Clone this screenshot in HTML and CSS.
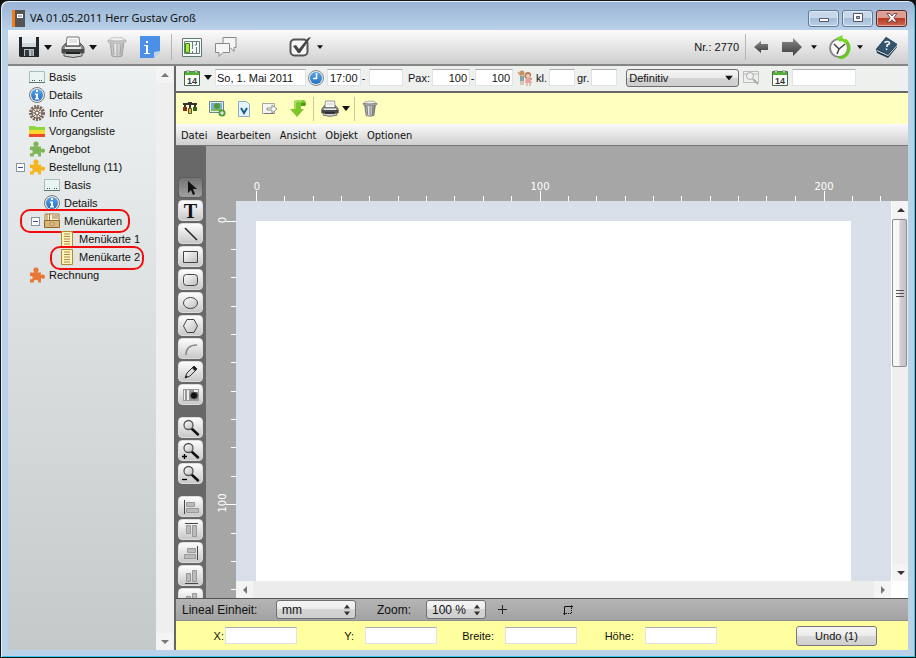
FILE: index.html
```html
<!DOCTYPE html>
<html lang="de">
<head>
<meta charset="utf-8">
<title>VA 01.05.2011 Herr Gustav Groß</title>
<link rel="stylesheet" href="styles.css">
</head>
<body>
<svg class="defs" aria-hidden="true">
  <defs>
    <linearGradient id="gBlue" x1="0" y1="0" x2="0" y2="1"><stop offset="0" stop-color="#5aa5ea"/><stop offset="1" stop-color="#2270c0"/></linearGradient>
    <linearGradient id="gGray" x1="0" y1="0" x2="0" y2="1"><stop offset="0" stop-color="#8a8a8a"/><stop offset="1" stop-color="#3c3c3c"/></linearGradient>
    <linearGradient id="gLight" x1="0" y1="0" x2="1" y2="1"><stop offset="0" stop-color="#ffffff"/><stop offset="1" stop-color="#bdbdbd"/></linearGradient>
    <linearGradient id="gBin" x1="0" y1="0" x2="1" y2="0"><stop offset="0" stop-color="#888"/><stop offset=".4" stop-color="#eee"/><stop offset="1" stop-color="#777"/></linearGradient>
  </defs>
  <symbol id="caret" viewBox="0 0 8 5"><path d="M0 0h8L4 5z" fill="#111"/></symbol>
  <symbol id="printer" viewBox="0 0 24 22">
    <path d="M6 1h12l1 9H5z" fill="#fafafa" stroke="#777"/>
    <path d="M8 4h8M8 6h8" stroke="#ccc"/>
    <path d="M2 10l3-3v3h14V7l3 3 1 2v5H1v-5z" fill="#8b8f8f" stroke="#555"/>
    <path d="M1 13h22v4H1z" fill="#454a4a"/>
    <path d="M4 11h16v2H4z" fill="#e5e8e5"/>
    <path d="M3 17h18v3q-9 3-18 0z" fill="#c9cccc" stroke="#555"/>
    <path d="M5 16h14v2H5z" fill="#222"/>
  </symbol>
  <symbol id="bin" viewBox="0 0 20 22">
    <path d="M3 6h14l-2 14q-5 2-10 0z" fill="url(#gBin)" stroke="#666"/>
    <path d="M6 8l1 11M10 8v12M14 8l-1 11" stroke="#666"/>
    <path d="M3 3q2-2 4-1 2-2 4 0 3-2 6 1v2H3z" fill="#eee" stroke="#999"/>
    <path d="M1 4q9 3 18 0v2q-9 3-18 0z" fill="#bbb" stroke="#666" stroke-width=".7"/>
  </symbol>
  <symbol id="calendar" viewBox="0 0 16 16">
    <path d="M.5 1.500h15v14H.5z" fill="#fff" stroke="#48664a"/>
    <path d="M1 1.500h14V5H1z" fill="#4fb52f"/>
    <path d="M3 0h2v3H3zM11 0h2v3h-2z" fill="#e8e8e8" stroke="#666" stroke-width=".5"/>
  </symbol>
  <symbol id="card" viewBox="0 0 16 14">
    <path d="M.5 1.500h15v11H.5z" fill="#eaf5f3" stroke="#a4bcbc"/>
    <path d="M0 12.500h16" stroke="#5c7776"/><path d="M3 10h1v1H3zM5 10h1v1H5zM10 10h1v1h-1zM12 10h1v1h-1z" fill="#3b5554"/>
  </symbol>
  <symbol id="info" viewBox="0 0 16 16">
    <circle cx="8" cy="8" r="7.500" fill="#e9eef2" stroke="#777"/><circle cx="8" cy="8" r="6" fill="url(#gBlue)"/>
    <path d="M7 3h2v2H7zM6 6.500h3V11h1v1.500H6V11h1V8H6z" fill="#fff"/>
  </symbol>
  <symbol id="puzzle" viewBox="0 0 16 16">
    <path d="M1 5.500h4.500C3.300 3 4.500.5 7 .5s3.700 2.500 1.500 5H12v2.700c2-1.300 4-.3 4 1.500s-2 2.800-4 1.300V15.500H9c1-2-.5-2.800-2-2.800s-3 .8-2 2.800H1V12c1.700.8 2.700 0 2.700-1.300S2.700 8.600 1 9.400z"/>
  </symbol>
  <symbol id="menu-card" viewBox="0 0 14 16">
    <path d="M1.500.5h11v15h-11z" fill="#fff3b8" stroke="#b18a33"/><path d="M4 3h6M4 5.500h6M4 8h6M4 10.500h6M4 13h6" stroke="#a98e4c"/>
  </symbol>
  <symbol id="lens" viewBox="0 0 22 18">
    <path d="M11 9l7 6.500" stroke="#111" stroke-width="2.500" stroke-linecap="round"/><circle cx="8.500" cy="6" r="4.500" fill="url(#gLight)" stroke="#555" stroke-width="1.300"/>
  </symbol>
  <symbol id="updown" viewBox="0 0 6 11"><path d="M0 4l3-4 3 4zM0 7h6l-3 4z" fill="#333"/></symbol>
</svg>

<div class="window">
  <header class="titlebar">
    <svg class="app-icon" width="13" height="17" viewBox="0 0 13 17"><path d="M0 0h13v17H0z" fill="#555"/><path d="M0 0h3v17H0z" fill="#f57c14"/><path d="M5 4h6v4H5z" fill="#fff"/><path d="M6 6h4" stroke="#5175a5"/></svg>
    <h1 class="title">VA 01.05.2011 Herr Gustav Groß</h1>
    <button class="win-btn" aria-label="Minimieren"><svg width="12" height="10" viewBox="0 0 12 10"><path d="M1.500 5.500h9v3h-9z" fill="#fff" stroke="#535666"/></svg></button>
    <button class="win-btn" aria-label="Maximieren"><svg width="12" height="10" viewBox="0 0 12 10"><path d="M1.500.5h9v8h-9z" fill="#fff" stroke="#535666"/><path d="M4.500 3.500h3v2h-3z" fill="#9cb4cf" stroke="#535666"/></svg></button>
    <button class="win-btn close" aria-label="Schließen"><svg width="12" height="10" viewBox="0 0 12 10"><path d="M1 .5h3L6 3 8 .5h3L7.800 4.800 11 9H8L6 6.700 4 9H1l3.200-4.200z" fill="#fff" stroke="#573038" stroke-width=".8"/></svg></button>
  </header>

  <div class="client">
    <div class="toolbar">
      <button class="tool save" aria-label="Speichern"><svg width="22" height="20" viewBox="0 0 22 20"><path d="M1 0h20v20H2l-1-1z" fill="#22282c"/><path d="M4 0h14v10H4z" fill="#e9eff1"/><path d="M4 6h14v4H4z" fill="#cfd8db"/><path d="M6 12h10v7H6z" fill="#b9c0c3"/><path d="M7 13h4v6H7z" fill="#333a3e"/><path d="M13 13h2v6h-2z" fill="#8b9397"/></svg></button>
      <button class="drop" aria-label="Speichern unter"><svg width="8" height="5"><use href="#caret"/></svg></button>
      <button class="tool print" aria-label="Drucken"><svg width="24" height="22"><use href="#printer"/></svg></button>
      <button class="drop" aria-label="Druckoptionen"><svg width="8" height="5"><use href="#caret"/></svg></button>
      <button class="tool trash" aria-label="Löschen" disabled><svg width="20" height="22"><use href="#bin"/></svg></button>
      <button class="tool note" aria-label="Information"><svg width="20" height="22" viewBox="0 0 20 22"><path d="M0 0h20v15l-6 7H0z" fill="#4b8fe8"/><path d="M14 22v-6l6-1z" fill="#bcd6fa"/><path d="M6 5h2v2H6zM4 9h4v8h2v1H4v-1h2v-7H4z" fill="#fff"/></svg></button>
      <span class="sep"></span>
      <button class="tool plan" aria-label="Raumplan"><svg width="20" height="19" viewBox="0 0 20 19"><path d="M.5.500h19v18H.5z" fill="#f5faf9" stroke="#5e7878"/><path d="M2.500 3.500h15v12h-15zM10.500 3v8M14.500 3v4h-2M14.500 16V9M10.500 13v3" fill="none" stroke="#667d7c"/><path d="M3.500 5.500h4v9h-4z" fill="#a8ea3c" stroke="#3f8a0b"/></svg></button>
      <button class="tool chat" aria-label="Kommentare"><svg width="22" height="20" viewBox="0 0 22 20"><path d="M8 .5h13v10h-2v4l-4-4H8z" fill="#f5f5f5" stroke="#888"/><path d="M.5 6.500h14v9H8l-4 4v-4H.5z" fill="#f5f5f5" stroke="#888"/></svg></button>
      <button class="tool check" aria-label="Erledigt"><svg width="23" height="20" viewBox="0 0 23 20"><rect x="1.500" y="2.500" width="17" height="16" rx="4" fill="#f8f8f8" stroke="#555" stroke-width="2"/><path d="M4 9l3-1 3 4L19 1l3-1-11 16H9z" fill="#444"/></svg></button>
      <button class="drop small" aria-label="Status wählen"><svg width="6" height="4"><use href="#caret"/></svg></button>
      <span class="number">Nr.: 2770</span>
      <span class="sep last"></span>
      <button class="tool" aria-label="Zurück"><svg width="14" height="12" viewBox="0 0 14 12"><path d="M0 6l7-6v3h7v6H7v3z" fill="url(#gGray)"/></svg></button>
      <button class="tool fwd" aria-label="Vor"><svg width="20" height="18" viewBox="0 0 20 18"><path d="M20 9l-9-9v4H0v10h11v4z" fill="url(#gGray)"/></svg></button>
      <button class="drop small" aria-label="Verlauf"><svg width="6" height="4"><use href="#caret"/></svg></button>
      <button class="tool clock" aria-label="Zeit"><svg width="24" height="24" viewBox="0 0 24 24"><circle cx="11" cy="13" r="9" fill="#fafafa" stroke="#888" stroke-width="2"/><path d="M17 5a10 10 0 0 1-6 18" fill="none" stroke="#68ca1d" stroke-width="3"/><path d="M8 3l7-3-1 3q4 1 6 4l-3 1q-2-2-5-2l1 2z" fill="#79d928"/><path d="M6 9l5 5 6-5M11 14l-2 5" fill="none" stroke="#444" stroke-width="1.500"/></svg></button>
      <button class="drop small" aria-label="Zeitoptionen"><svg width="6" height="4"><use href="#caret"/></svg></button>
      <button class="tool help" aria-label="Hilfe"><svg width="22" height="22" viewBox="0 0 22 22"><path d="M0 13L10 1l11 7v3L12 22 1 17z" fill="#20384d"/><path d="M1 14l11 5 9-10v1l-9 10-11-5z" fill="#eef2f5"/><path d="M1 13L10 1l11 7-9 10z" fill="#34536d"/><path d="M8.500 6.500q4.500-2 5 .5 0 1.500-2.500 2v2M10.500 12.500v1.500" fill="none" stroke="#fff" stroke-width="1.500"/></svg></button>
    </div>

    <div class="body">
      <nav class="sidebar">
        <ul class="tree">
          <li><svg class="ico"><use href="#card"/></svg><a href="#">Basis</a></li>
          <li><svg class="ico"><use href="#info"/></svg><a href="#">Details</a></li>
          <li><svg class="ico" viewBox="0 0 16 16"><circle cx="8" cy="8" r="6.500" fill="none" stroke="#7b6558" stroke-width="3" stroke-dasharray="2 1"/><circle cx="8" cy="8" r="5" fill="#f1e8df" stroke="#665044"/><path d="M8 2v12M2 8h12M4 4l8 8M12 4l-8 8" stroke="#7b6558"/><circle cx="8" cy="8" r="2" fill="#fff" stroke="#665044"/></svg><a href="#">Info Center</a></li>
          <li><svg class="ico" viewBox="0 0 16 16"><path d="M0 3h6l1 1h9v3H0z" fill="#8ed63e"/><path d="M0 7h16v4H0z" fill="#fbd62c"/><path d="M0 11h16v3H0z" fill="#ed4a25"/></svg><a href="#">Vorgangsliste</a></li>
          <li><svg class="ico green"><use href="#puzzle"/></svg><a href="#">Angebot</a></li>
          <li class="open"><button class="toggle" aria-label="Bestellung zuklappen"></button><svg class="ico yellow"><use href="#puzzle"/></svg><a href="#">Bestellung (11)</a></li>
          <li class="l2"><svg class="ico"><use href="#card"/></svg><a href="#">Basis</a></li>
          <li class="l2"><svg class="ico"><use href="#info"/></svg><a href="#">Details</a></li>
          <li class="l2 open"><button class="toggle" aria-label="Menükarten zuklappen"></button><svg class="ico" viewBox="0 0 16 16"><path d="M1 1h14v8H1z" fill="#fff4d8" stroke="#a17b3d"/><path d="M3 1v7M5.500 1v7M8 3h6M8 5h6" stroke="#a17b3d"/><path d="M.5 7.500h15v7H.5z" fill="#dcb676" stroke="#8c6732"/><path d="M6 10h4v2H6z" fill="#fff" stroke="#8c6732" stroke-width=".7"/></svg><a href="#">Menükarten</a><span class="mark wide"></span></li>
          <li class="l3"><svg class="ico"><use href="#menu-card"/></svg><a href="#">Menükarte 1</a></li>
          <li class="l3"><svg class="ico"><use href="#menu-card"/></svg><a href="#">Menükarte 2</a><span class="mark"></span></li>
          <li><svg class="ico orange"><use href="#puzzle"/></svg><a href="#">Rechnung</a></li>
        </ul>
        <div class="scroll-v side-scroll">
          <button class="arrow" aria-label="Nach oben"><svg width="8" height="4" viewBox="0 0 8 4"><path d="M0 4l4-4 4 4z" fill="#777"/></svg></button>
          <button class="arrow" aria-label="Nach unten"><svg width="8" height="4" viewBox="0 0 8 4"><path d="M0 0h8L4 4z" fill="#777"/></svg></button>
        </div>
      </nav>

      <main class="main">
        <form class="booking">
          <button type="button" class="tool" aria-label="Kalender"><svg width="16" height="16"><use href="#calendar"/><text x="8" y="14" class="cal-num">14</text></svg></button>
          <button type="button" class="drop" aria-label="Datum wählen"><svg width="8" height="5"><use href="#caret"/></svg></button>
          <input class="field date" aria-label="Datum" value="So, 1. Mai 2011">
          <svg class="time-icon" width="16" height="16" viewBox="0 0 16 16"><circle cx="8" cy="8" r="7.500" fill="#e4eaf0" stroke="#888"/><circle cx="8" cy="8" r="6" fill="url(#gBlue)"/><path d="M8.500 3v5.500H5" fill="none" stroke="#fff" stroke-width="1.500"/></svg>
          <input class="field time" aria-label="Beginn" value="17:00"><span class="dash">-</span>
          <input class="field time" aria-label="Ende">
          <label class="pax" for="pax1">Pax:</label>
          <input class="field count" id="pax1" value="100"><span class="dash">-</span>
          <input class="field count" aria-label="Pax bis" value="100">
          <svg class="kids" width="16" height="16" viewBox="0 0 16 16"><path d="M1 2l3 4M7 5l3 5 5-1" stroke="#d9a27c" stroke-width="1.500"/><circle cx="5" cy="3" r="2.500" fill="#c59364"/><circle cx="11" cy="5" r="3" fill="#ad7958"/><circle cx="11" cy="6" r="2" fill="#f4ceb0"/><path d="M3 6h4v5H3z" fill="#7ea7a7"/><path d="M9 8h4l2 5H8z" fill="#eea09d"/><path d="M4 11v4M6 11v4M10 13v3M13 13v3" stroke="#c59a7c"/></svg>
          <label for="kl">kl.</label><input class="field mini" id="kl">
          <label for="gr">gr.</label><input class="field mini" id="gr">
          <span class="pick status"><select aria-label="Status"><option>Definitiv</option></select><svg width="8" height="5"><use href="#caret"/></svg></span>
          <button type="button" class="tool" aria-label="Suchen" disabled><svg width="16" height="16" viewBox="0 0 16 16"><path d="M.5 1.500h15v11H.5zM1 4h14" fill="none" stroke="#bbb"/><circle cx="7" cy="6" r="3.500" fill="#f2f2f2" stroke="#aaa"/><path d="M10 9l5 5" stroke="#aaa" stroke-width="2"/></svg></button>
          <button type="button" class="tool option" aria-label="Optionsdatum wählen"><svg width="16" height="16"><use href="#calendar"/><text x="8" y="14" class="cal-num">14</text></svg></button>
          <input class="field until" aria-label="Optionsdatum">
        </form>

        <div class="actions">
          <button class="tool tables" aria-label="Tische"><svg width="14" height="13" viewBox="0 0 14 13"><path d="M0 1h14v2H0zM6 1h2v5H6zM1 3h2v2H1zM11 3h2v2h-2z" fill="#333"/><path d="M5 0h4v1H5z" fill="#333"/><path d="M0 5h4v4H0z" fill="#8c2c1c"/><path d="M5.500 6.500h3v5h-3z" fill="#e8bb12" stroke="#554"/><path d="M10 5h4v4h-4z" fill="#2b6a26"/></svg></button>
          <button class="tool" aria-label="Bild einfügen"><svg width="17" height="17" viewBox="0 0 17 17"><path d="M.5 1.500h14v11H.5z" fill="#e4eef4" stroke="#71838b"/><path d="M2 3h11v8H2z" fill="#72afda"/><path d="M2 9h11v2H2z" fill="#7eba4a"/><circle cx="8" cy="6" r="3" fill="#559832"/><circle cx="13" cy="13" r="3.500" fill="#4e9a3f"/><path d="M13 11v4M11 13h4" stroke="#fff"/></svg></button>
          <button class="tool" aria-label="Variablen"><svg width="12" height="16" viewBox="0 0 12 16"><path d="M.5.500h8l3 3v12H.5z" fill="#e6f3fb" stroke="#83b1ca"/><path d="M3 7l3 5 3-5" fill="none" stroke="#145d91" stroke-width="2"/></svg></button>
          <button class="tool" aria-label="Exportieren"><svg width="16" height="15" viewBox="0 0 16 15"><path d="M.5 2.500h12v10H.5z" fill="#f6f7f0" stroke="#a3aaa4"/><path d="M2 12.500h10" stroke="#777"/><path d="M5 7h5V4l5 4-5 4V9H5z" fill="#fff" stroke="#8b938e"/></svg></button>
          <button class="tool" aria-label="Aktualisieren"><svg width="16" height="17" viewBox="0 0 16 17"><path d="M7 0h6q3 0 3 4l-1 2h-4v3h3l-7 8-7-8h4V3q0-3 3-3z" fill="#7cc62c"/><path d="M12 1H8Q5 1 5 4v5" fill="none" stroke="#b4e365" stroke-width="1.500"/><path d="M11 3q4-1 5 1l-1 2h-4z" fill="#569a18"/></svg></button>
          <span class="sep"></span>
          <button class="tool" aria-label="Karte drucken"><svg width="18" height="17"><use href="#printer"/></svg></button>
          <button class="drop" aria-label="Druckauswahl"><svg width="8" height="5"><use href="#caret"/></svg></button>
          <span class="sep"></span>
          <button class="tool" aria-label="Karte löschen"><svg width="16" height="17"><use href="#bin"/></svg></button>
        </div>

        <nav class="menubar"><a href="#">Datei</a><a href="#">Bearbeiten</a><a href="#">Ansicht</a><a href="#">Objekt</a><a href="#">Optionen</a></nav>

        <div class="editor">
          <div class="toolbox">
            <div class="group">
              <button class="active" aria-label="Auswahl"><svg viewBox="0 0 22 18"><path d="M8 2v12l3-3 2 5 2-1-2-5h4z" fill="#111"/></svg></button>
              <button class="letter" aria-label="Text">T</button>
              <button aria-label="Linie"><svg viewBox="0 0 22 18"><path d="M5 3l12 12" stroke="#222" stroke-width="1.500"/></svg></button>
              <button aria-label="Rechteck"><svg viewBox="0 0 22 18"><path d="M3.500 3.500h14v11h-14z" fill="url(#gLight)" stroke="#444"/></svg></button>
              <button aria-label="Abgerundetes Rechteck"><svg viewBox="0 0 22 18"><rect x="3.500" y="3.500" width="14" height="11" rx="3" fill="url(#gLight)" stroke="#444"/></svg></button>
              <button aria-label="Ellipse"><svg viewBox="0 0 22 18"><ellipse cx="10.500" cy="9" rx="7" ry="5.500" fill="url(#gLight)" stroke="#444"/></svg></button>
              <button aria-label="Polygon"><svg viewBox="0 0 22 18"><path d="M7 2.500h7l3.500 6.500-3.500 6.500H7L3.500 9z" fill="url(#gLight)" stroke="#444"/></svg></button>
              <button aria-label="Bogen"><svg viewBox="0 0 22 18"><path d="M6 15q0-10 11-10" fill="none" stroke="#888" stroke-width="1.500"/></svg></button>
              <button aria-label="Stift"><svg viewBox="0 0 22 18"><path d="M5 15l2-5 7-7 3 3-7 7z" fill="#ddd" stroke="#333"/><path d="M5 15l1-3 2 2zM12 5l3 3 2-2-3-3z" fill="#222"/></svg></button>
              <button aria-label="Bild"><svg viewBox="0 0 22 18"><path d="M3 3h16v12H3z" fill="#999"/><path d="M4 4h1v10H4zM7 4h2v10H7z" fill="#eee"/><circle cx="14" cy="9.500" r="3.500" fill="#111" stroke="#555"/><path d="M14 4h4v2h-4z" fill="#eee"/></svg></button>
            </div>
            <div class="group">
              <button aria-label="Zoom"><svg><use href="#lens"/></svg></button>
              <button aria-label="Vergrößern"><svg viewBox="0 0 22 18"><use href="#lens"/><path d="M2 14.500h5M4.500 12v5" stroke="#000" stroke-width="1.300"/></svg></button>
              <button aria-label="Verkleinern"><svg viewBox="0 0 22 18"><use href="#lens"/><path d="M2 14.500h5" stroke="#000" stroke-width="1.300"/></svg></button>
            </div>
            <div class="group">
              <button aria-label="Links ausrichten"><svg viewBox="0 0 22 18"><path d="M4.500 2v14" stroke="#444"/><path d="M6.500 4.500h8v4h-8zM6.500 10.500h12v4h-12z" fill="#bbb" stroke="#999"/></svg></button>
              <button aria-label="Oben ausrichten"><svg viewBox="0 0 22 18"><path d="M5 2.500h13" stroke="#444"/><path d="M6.500 4.500h4v8h-4zM12.500 4.500h4v11h-4z" fill="#bbb" stroke="#999"/></svg></button>
              <button aria-label="Rechts ausrichten"><svg viewBox="0 0 22 18"><path d="M17.500 2v14" stroke="#444"/><path d="M7.500 4.500h8v4h-8zM4.500 10.500h11v4h-11z" fill="#bbb" stroke="#999"/></svg></button>
              <button aria-label="Unten ausrichten"><svg viewBox="0 0 22 18"><path d="M5 16.500h13" stroke="#444"/><path d="M6.500 6.500h4v8h-4zM12.500 3.500h4v11h-4z" fill="#bbb" stroke="#999"/></svg></button>
              <button aria-label="Zentrieren"><svg viewBox="0 0 22 18"><path d="M6.500 6.500h4v10h-4zM12.500 3.500h4v13h-4z" fill="#bbb" stroke="#999"/></svg></button>
            </div>
          </div>
          <div class="stage">
            <svg class="ruler-top" aria-hidden="true">
              <path d="M50 45v10M334 45v10M618 45v10M78 50v5M107 50v5M135 50v5M163 50v5M192 50v5M220 50v5M248 50v5M277 50v5M305 50v5M362 50v5M390 50v5M419 50v5M447 50v5M475 50v5M504 50v5M532 50v5M560 50v5M589 50v5M646 50v5M674 50v5"/>
              <text x="51" y="44">0</text><text x="334" y="44">100</text><text x="618" y="44">200</text>
            </svg>
            <svg class="ruler-left" aria-hidden="true">
              <path d="M20 20h10M20 303h10M25 48h5M25 76h5M25 105h5M25 133h5M25 161h5M25 190h5M25 218h5M25 246h5M25 275h5M25 332h5M25 360h5M25 388h5"/>
              <text transform="translate(20 19) rotate(-90)">0</text><text transform="translate(20 302) rotate(-90)">100</text>
            </svg>
            <div class="canvas"><div class="paper"></div></div>
            <div class="scroll-v">
              <button class="arrow" aria-label="Nach oben"><svg width="8" height="4" viewBox="0 0 8 4"><path d="M0 4l4-4 4 4z" fill="#333"/></svg></button>
              <div class="thumb"><svg width="8" height="9" viewBox="0 0 8 9"><path d="M0 1.500h8M0 4.500h8M0 7.500h8" stroke="#555"/></svg></div>
              <button class="arrow" aria-label="Nach unten"><svg width="8" height="4" viewBox="0 0 8 4"><path d="M0 0h8L4 4z" fill="#333"/></svg></button>
            </div>
            <div class="scroll-h">
              <button class="arrow" aria-label="Nach links"><svg width="4" height="8" viewBox="0 0 4 8"><path d="M4 0v8L0 4z" fill="#777"/></svg></button>
              <button class="arrow" aria-label="Nach rechts"><svg width="4" height="8" viewBox="0 0 4 8"><path d="M0 0v8l4-4z" fill="#777"/></svg></button>
            </div>
            <div class="corner"></div>
          </div>
        </div>

        <div class="units">
          <label class="unit-label" for="unit">Lineal Einheit:</label>
          <span class="pick unit"><select id="unit"><option>mm</option></select><svg width="6" height="11"><use href="#updown"/></svg></span>
          <label class="zoom-label" for="zoom">Zoom:</label>
          <span class="pick zoom"><select id="zoom"><option>100 %</option></select><svg width="6" height="11"><use href="#updown"/></svg></span>
          <svg class="cross" width="9" height="9" viewBox="0 0 9 9"><path d="M4.500 0v9M0 4.500h9" stroke="#222"/></svg>
          <svg width="12" height="12" viewBox="0 0 12 12"><path d="M2.500 11V2.500H11" fill="none" stroke="#111"/><path d="M9 1l2 1.500L9 4zM1 9h3l-1.500 2z" fill="#111"/><path d="M9.500 4v5.500H4" fill="none" stroke="#111" stroke-dasharray="1 1"/></svg>
        </div>

        <form class="position">
          <label class="near" for="px">X:</label><input class="field" id="px">
          <label for="py">Y:</label><input class="field" id="py">
          <label for="pw">Breite:</label><input class="field" id="pw">
          <label for="ph">Höhe:</label><input class="field" id="ph">
          <button type="button" class="undo">Undo (1)</button>
        </form>
      </main>
    </div>
  </div>
</div>
</body>
</html>
```
FILE: styles.css
```css
* { box-sizing: border-box; }
html, body { height: 100%; }
body {
  margin: 0;
  background: #111;
  color: #111;
  font: 11px/16px "Liberation Sans", sans-serif;
}
button, input, select { font: inherit; color: inherit; }
button { padding: 0; border: 0; background: none; flex: none; }
svg { display: block; flex: none; }
a { color: inherit; text-decoration: none; }
.defs { position: absolute; width: 0; height: 0; }
.cal-num { font: bold 9px "Liberation Sans", sans-serif; fill: #333; text-anchor: middle; }

.window {
  height: 100vh;
  display: flex;
  flex-direction: column;
  padding: 0 6px 7px;
  border: 1px solid #151515;
  border-radius: 8px 8px 0 0;
  background: linear-gradient(#98b4d3, #bad1ea 30px);
  box-shadow: inset 1px 1px #e6f2fc, inset -1px -1px #35c9ee;
}
.titlebar { height: 29px; flex: none; display: flex; align-items: center; gap: 3px; padding: 5px 2px 0 5px; }
.title { flex: 1; margin: 0; padding-left: 2px; font: 11px/18px "Noto Sans", sans-serif; }
.win-btn {
  width: 31px; height: 17px;
  display: flex; align-items: center; justify-content: center;
  border: 1px solid #647b96; border-radius: 3px;
  background: linear-gradient(#c6d8ea 50%, #a5bdd7 50%, #b9d0e8);
  box-shadow: inset 0 0 0 1px #dce9f6;
}
.win-btn.close { border-color: #5b2a2b; background: linear-gradient(#dc9d92 50%, #b9391f 50%, #cb6a52); box-shadow: inset 0 0 0 1px #e5a99d; }
.client { flex: 1; min-height: 0; display: flex; flex-direction: column; margin: 0 1px; }

.toolbar {
  height: 36px; flex: none;
  display: flex; align-items: center;
  padding: 0 10px;
  border-bottom: 2px solid #858585;
  background: linear-gradient(#fcfcfc, #cecece);
}
.tool, .drop { display: flex; align-items: center; justify-content: center; }
.drop { padding: 0 4px; }
.sep { width: 1px; height: 26px; background: #b5b5b5; flex: none; }
.toolbar .print { margin-left: 5px; }
.toolbar .trash { margin: 0 13px 0 6px; opacity: .5; }
.toolbar .sep { margin: 0 10px 0 11px; }
.toolbar .chat { margin: 0 52px 0 13px; }
.drop.small { padding: 0 5px; }
.number { margin-left: auto; }
.toolbar .sep.last { margin: 0 8px 0 6px; }
.fwd { margin: 0 4px 0 14px; }
.clock { margin-left: 6px; }
.help { margin-left: 8px; }

.body { flex: 1; min-height: 0; display: flex; }
.sidebar { width: 168px; flex: none; display: flex; border-right: 2px solid #666; }
.tree { flex: 1; margin: 0; padding: 2px 0 0 21px; list-style: none; background: linear-gradient(#eef1f1, #c4c9ca); }
.tree li { position: relative; height: 18px; display: flex; align-items: center; gap: 4px; white-space: nowrap; }
.tree .l2 { padding-left: 15px; }
.tree .l3 { padding-left: 30px; }
.tree .open { margin-left: -13px; }
.ico { width: 16px; height: 16px; }
.green { fill: #7fb65b; }
.yellow { fill: #f4b51e; }
.orange { fill: #e97735; }
.toggle { width: 9px; height: 9px; border: 1px solid #8894a0; background: linear-gradient(#3b51a0, #3b51a0) center / 5px 1px no-repeat #fff; }
.mark { position: absolute; left: 21px; top: -2px; width: 94px; height: 24px; border: 2px solid #f10d0d; border-radius: 10px; pointer-events: none; }
.mark.wide { left: 4px; top: -3px; width: 110px; }
.scroll-v { display: flex; flex-direction: column; align-items: stretch; width: 17px; background: #efefef; }
.side-scroll { width: 18px; justify-content: space-between; }
.arrow { width: 17px; height: 17px; display: flex; align-items: center; justify-content: center; background: #f4f4f4; }

.main { flex: 1; min-width: 0; display: flex; flex-direction: column; }
.field { width: 72px; height: 17px; padding: 0 2px; border: 1px solid #dfe2e8; border-top-color: #abadb3; background: #fff; border-radius: 0; }
.booking {
  height: 27px; flex: none;
  display: flex; align-items: center;
  padding: 0 8px 2px;
  border-bottom: 2px solid #686868;
  background: #eef0ee;
}
.booking .date { width: 91px; margin-right: 2px; padding: 0 1px; }
.booking .drop { padding: 0 3px 0 4px; }
.booking .time { width: 34px; margin-left: 3px; }
.dash { width: 5px; text-align: center; }
.pax { width: 29px; padding-left: 5px; }
.count { width: 38px; text-align: right; }
.kids { margin: 0 3px 0 4px; }
.booking .mini { width: 26px; margin: 0 2px; }
.pick { position: relative; display: flex; }
.pick select {
  width: 100%; height: 18px; padding: 0 2px;
  border: 1px solid #6f6f6f; border-radius: 3px;
  background: linear-gradient(#f5f5f5, #ebebeb 50%, #d4d4d4 50%, #cfcfcf);
  appearance: none;
}
.pick svg { position: absolute; right: 6px; top: 50%; transform: translateY(-50%); pointer-events: none; }
.status { width: 113px; margin: 0 4px 0 7px; }
.option { margin: 0 4px 0 13px; }
.until { width: 64px; }

.actions { height: 31px; flex: none; display: flex; align-items: center; gap: 12px; padding: 0 7px; background: #ffffbf; }
.actions .sep { margin: 0 -5px; height: 24px; background: #c9c99a; }
.actions .drop { padding: 0; margin: 0 -3px 0 -9px; }
.menubar { height: 22px; flex: none; display: flex; align-items: center; gap: 9px; padding: 2px 5px 0; border-bottom: 1px solid #777; background: linear-gradient(#fafafa, #cfcfcf); font: 11px/16px "DejaVu Sans Condensed", "DejaVu Sans", sans-serif; }

.editor { flex: 1; min-height: 0; display: flex; overflow: hidden; }
.toolbox { width: 30px; flex: none; display: flex; flex-direction: column; gap: 12px; padding: 31px 2px 0; background: #686868; overflow: hidden; }
.group { display: flex; flex-direction: column; gap: 2px; }
.group button { width: 25px; height: 21px; display: flex; align-items: center; justify-content: center; border: 1px solid #ddd; border-radius: 4px; background: linear-gradient(#fdfdfd, #c8c8c8); }
.group button svg { width: 22px; height: 18px; }
.group .active { border-color: #5e5e5e; background: linear-gradient(#747474, #a0a0a0); }
.group .letter { font: bold 20px/18px "Liberation Serif", serif; }
.stage { flex: 1; min-width: 0; display: grid; grid-template: 55px minmax(0, 1fr) 17px / 30px minmax(0, 1fr) 17px; background: #a6a6a6; }
.ruler-top { grid-column: 1 / 4; grid-row: 1; width: 100%; height: 100%; }
.ruler-left { grid-column: 1; grid-row: 2 / 4; width: 100%; height: 100%; }
.ruler-top path, .ruler-left path { stroke: #fff; stroke-width: 1; shape-rendering: crispEdges; }
.ruler-top text, .ruler-left text { fill: #fff; font: 10px "DejaVu Sans", sans-serif; text-anchor: middle; }
.canvas { grid-column: 2; grid-row: 2; display: flex; padding: 20px 40px 0 20px; background: #d8dfe9; }
.paper { flex: 1; background: #fff; }
.stage .scroll-v { grid-column: 3; grid-row: 2; border-left: 1px solid #fff; }
.thumb { height: 39%; margin-top: 1px; margin-bottom: auto; width: 15px; display: flex; align-items: center; justify-content: center; border: 1px solid #8e8e8e; border-radius: 2px; background: linear-gradient(90deg, #f7f7f7 45%, #d0d0d4 55%, #c2c2c7); }
.scroll-h { grid-column: 2; grid-row: 3; display: flex; justify-content: space-between; background: #ececec; }
.corner { grid-column: 3; grid-row: 3; background: #fff; }

.units { height: 23px; flex: none; display: flex; align-items: center; padding: 0 6px; border-top: 1px solid #555; border-bottom: 1px solid #909090; background: linear-gradient(#b5b5b5, #a2a2a2); font: 12px/16px "Liberation Sans", sans-serif; }
.unit-label { width: 94px; white-space: nowrap; }
.units select { height: 19px; padding: 0 5px; }
.unit { width: 80px; margin-right: 21px; }
.zoom-label { width: 49px; }
.zoom { width: 60px; }
.cross { margin: 0 55px 0 12px; }

.position { height: 29px; flex: none; display: flex; align-items: center; padding-right: 31px; background: #ffff9f; }
.position label { width: 68px; padding-right: 11px; text-align: right; }
.position .near { width: 49px; padding-right: 1px; }
.undo { width: 81px; height: 20px; margin-left: auto; border: 1px solid #777; border-radius: 3px; background: linear-gradient(#f5f5f5, #ebebeb 50%, #dadada 50%, #cfcfcf); }
```
